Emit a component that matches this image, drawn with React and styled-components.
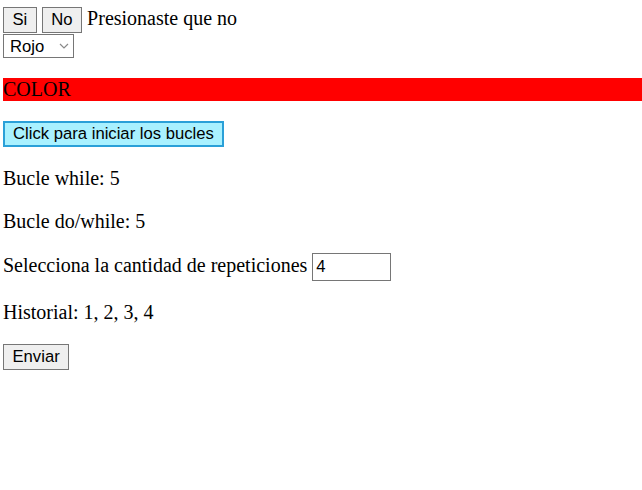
import React from "react";
import styled, { createGlobalStyle } from "styled-components";

const Global = createGlobalStyle`
  html, body { margin: 0; padding: 0; background: #fff; }
  body {
    font-family: "Liberation Serif", "Times New Roman", serif;
    font-size: 20px;
    color: #000;
  }
`;

const Page = styled.div`
  padding: 7px 0 0 3px;
`;

const TopRow = styled.div`
  line-height: normal;
`;

const Button = styled.button`
  font-family: "Liberation Sans", Arial, sans-serif;
  font-size: 16.67px;
  line-height: normal;
  color: #000;
  background: ${(p) => (p.$accent ? "#a9f1ff" : "#efefef")};
  border: ${(p) => (p.$accent ? "2px solid #2aa0d8" : "1px solid #767676")};
  border-radius: 0;
  padding: ${(p) => (p.$accent ? "1px 8px" : "1px 8.5px")};
  margin: 0;
  height: 26px;
  box-sizing: border-box;
  vertical-align: baseline;
  cursor: pointer;
`;

const SelectWrap = styled.div`
  position: relative;
  width: 71px;
  margin-top: 1px;
`;

const Select = styled.select`
  display: block;
  appearance: none;
  -webkit-appearance: none;
  font-family: "Liberation Sans", Arial, sans-serif;
  font-size: 16.67px;
  color: #000;
  width: 71px;
  height: 24px;
  box-sizing: border-box;
  border: 1px solid #767676;
  border-radius: 0;
  background: #fff;
  padding: 0 6px;
  margin: 0;
`;

const Chevron = styled.svg`
  position: absolute;
  right: 5px;
  top: 9px;
  width: 10px;
  height: 6px;
  pointer-events: none;
`;

const Banner = styled.p`
  margin: 20px 0;
  background: #ff0000;
  line-height: 23px;
`;

const Para = styled.p`
  margin: 20px 0;
  line-height: 23px;
`;

const NumberInput = styled.input`
  font-family: "Liberation Sans", Arial, sans-serif;
  font-size: 16.67px;
  color: #000;
  width: 79px;
  height: 28px;
  box-sizing: border-box;
  border: 1px solid #767676;
  border-radius: 0;
  padding: 1px 3px;
  margin: 0;
  vertical-align: baseline;
`;

export default function App() {
  return (
    <>
      <Global />
      <Page>
        <TopRow>
          <Button>Si</Button> <Button>No</Button> Presionaste que no
          <SelectWrap>
            <Select defaultValue="rojo">
              <option value="rojo">Rojo</option>
              <option value="verde">Verde</option>
              <option value="azul">Azul</option>
            </Select>
            <Chevron viewBox="0 0 10 6">
              <path d="M1 1 L5 5 L9 1" fill="none" stroke="#8a8a8a" strokeWidth="1.2" />
            </Chevron>
          </SelectWrap>
        </TopRow>
        <Banner>COLOR</Banner>
        <Para>
          <Button $accent>Click para iniciar los bucles</Button>
        </Para>
        <Para>Bucle while: 5</Para>
        <Para>Bucle do/while: 5</Para>
        <Para>
          Selecciona la cantidad de repeticiones{" "}
          <NumberInput type="text" defaultValue="4" />
        </Para>
        <Para>Historial: 1, 2, 3, 4</Para>
        <Button>Enviar</Button>
      </Page>
    </>
  );
}
